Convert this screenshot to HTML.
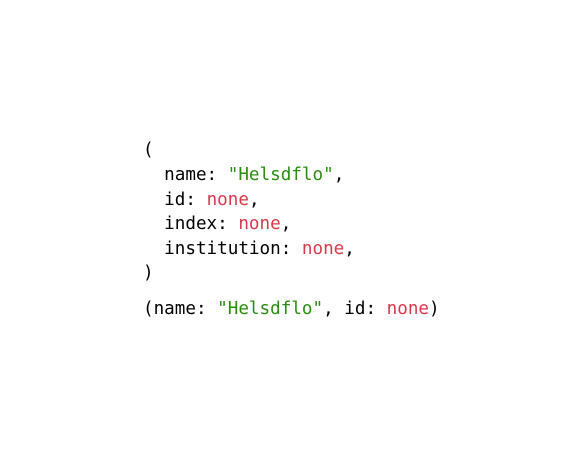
<!DOCTYPE html>
<html><head><style>
body{margin:0;width:580px;height:455px;background:#fff;position:relative;font-family:"DejaVu Sans Mono",monospace;font-size:17.6px;color:#000}
.l{position:absolute;left:143px;white-space:pre;line-height:20px}
.g{color:#298e0d}.r{color:#d73948}
</style></head><body>
<div class="l" style="top:140px">(</div>
<div class="l" style="top:165px">  name: <span class="g">"Helsdflo"</span>,</div>
<div class="l" style="top:190px">  id: <span class="r">none</span>,</div>
<div class="l" style="top:214px">  index: <span class="r">none</span>,</div>
<div class="l" style="top:239px">  institution: <span class="r">none</span>,</div>
<div class="l" style="top:263px">)</div>
<div class="l" style="top:299px">(name: <span class="g">"Helsdflo"</span>, id: <span class="r">none</span>)</div>
</body></html>
